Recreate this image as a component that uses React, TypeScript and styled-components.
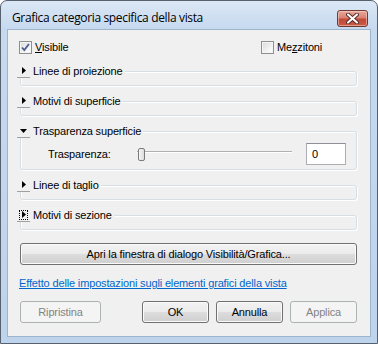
import styled, { createGlobalStyle } from 'styled-components';

const GlobalStyle = createGlobalStyle`
  html, body {
    margin: 0;
    padding: 0;
    background: #ffffff;
  }
  body {
    width: 378px;
    height: 344px;
    overflow: hidden;
  }
`;

const Window = styled.div`
  width: 378px;
  height: 344px;
  box-sizing: border-box;
  border: 1px solid #56606e;
  border-radius: 7px 7px 0 0;
  background: linear-gradient(#dbe7f5 0px, #c6d9ef 28px, #bed3ec 100%);
  display: flex;
  flex-direction: column;
  font-family: 'Liberation Sans', Arial, sans-serif;
  font-size: 11px;
  letter-spacing: -0.15px;
  color: #000;
  overflow: hidden;
`;

const TitleBar = styled.div`
  height: 28px;
  box-sizing: border-box;
  padding: 8px 9px 0 11px;
  display: flex;
  align-items: flex-start;
  justify-content: space-between;
`;

const Title = styled.span`
  font-family: 'Open Sans', 'Noto Sans', sans-serif;
  font-size: 12px;
  letter-spacing: -0.35px;
  line-height: 20px;
  margin-top: -1px;
  color: #000;
`;

const CloseButton = styled.div`
  width: 31px;
  height: 17px;
  margin-top: 1px;
  box-sizing: border-box;
  border: 1px solid #6b3a35;
  border-radius: 3px;
  background: linear-gradient(#e8a89c 0%, #d88373 45%, #c2493a 55%, #c85a45 100%);
  box-shadow: inset 0 0 0 1px rgba(255, 220, 210, 0.5);
  display: flex;
  align-items: center;
  justify-content: center;
`;

const Client = styled.div`
  flex: 1;
  margin: 0 6px 6px;
  border: 1px solid #9eb3cc;
  background: #f0f0f0;
  padding: 11px 13px 0 11px;
  display: flex;
  flex-direction: column;
`;

const CheckRow = styled.div`
  display: grid;
  grid-template-columns: 242px 1fr;
  height: 13px;
`;

const CheckLabel = styled.label`
  display: flex;
  align-items: center;
  gap: 3px;
  line-height: 13px;
`;

const CheckBox = styled.span`
  width: 13px;
  height: 13px;
  box-sizing: border-box;
  border: 1px solid #8e8f8f;
  background: linear-gradient(135deg, #d9d9d9 0%, #f6f6f6 70%, #ffffff 100%);
  box-shadow: inset 0 0 0 1px #f4f4f4;
  display: flex;
  align-items: center;
  justify-content: center;
`;

const Groups = styled.div`
  margin-top: 10px;
  display: flex;
  flex-direction: column;
  gap: 8px;
`;

const Group = styled.fieldset<{ $open?: boolean }>`
  margin: 0 0 0 1px;
  padding: 0 0 ${(p) => (p.$open ? '4px' : '7px')};
  min-width: 0;
  border: 1px solid #d5dfe5;
  border-radius: 3px;
  box-shadow: inset 1px 1px 0 #ffffff, 1px 1px 0 #ffffff;
`;

const Legend = styled.legend`
  margin-left: -4px;
  padding: 0 2px 0 0;
  height: 14px;
  display: flex;
  align-items: center;
  gap: 3px;
  background: #f0f0f0;
  line-height: 14px;
`;

const Toggle = styled.span<{ $focus?: boolean }>`
  width: 13px;
  height: 14px;
  box-sizing: border-box;
  border-bottom: 1px solid #a0a0a0;
  outline: ${(p) => (p.$focus ? '1px dotted #000' : 'none')};
  outline-offset: -3px;
  display: flex;
  align-items: center;
  justify-content: center;
`;

const GroupBody = styled.div`
  display: flex;
  align-items: center;
  padding: 5px 10px 0 27px;
`;

const FieldLabel = styled.span`
  width: 89px;
`;

const Slider = styled.div`
  position: relative;
  width: 155px;
  height: 22px;
  display: flex;
  align-items: center;

  &::before {
    content: '';
    position: absolute;
    left: 0;
    right: 0;
    top: 8px;
    height: 1px;
    background: #b0b0b0;
    border-bottom: 1px solid #ffffff;
  }
`;

const Thumb = styled.span`
  position: relative;
  margin: 1px 0 0 1px;
  width: 7px;
  height: 13px;
  box-sizing: border-box;
  border: 1px solid #7a7a7a;
  border-radius: 2px;
  background: linear-gradient(90deg, #f6f6f6, #dcdcdc);
`;

const TextBox = styled.div`
  margin-left: auto;
  width: 40px;
  height: 22px;
  box-sizing: border-box;
  border: 1px solid #abadb3;
  border-top-color: #8d9096;
  background: #ffffff;
  padding-left: 5px;
  line-height: 20px;
`;

const Button = styled.div<{ $width?: number; $disabled?: boolean }>`
  width: ${(p) => (p.$width ? `${p.$width}px` : 'auto')};
  height: 22px;
  box-sizing: border-box;
  border: 1px solid ${(p) => (p.$disabled ? '#adb2b5' : '#707070')};
  border-radius: 3px;
  background: ${(p) =>
    p.$disabled
      ? '#f4f4f4'
      : 'linear-gradient(#f2f2f2 0%, #ebebeb 50%, #dddddd 50%, #cfcfcf 100%)'};
  box-shadow: inset 0 0 0 1px ${(p) => (p.$disabled ? '#f4f4f4' : '#fbfbfb')};
  color: ${(p) => (p.$disabled ? '#838383' : '#000')};
  display: flex;
  align-items: center;
  justify-content: center;
  line-height: 20px;
`;

const WideButton = styled(Button)`
  margin: 13px 0 0 1px;
`;

const Link = styled.a`
  margin-top: 12px;
  color: #0066cc;
  text-decoration: underline;
  line-height: 13px;
  align-self: flex-start;
`;

const Footer = styled.div`
  margin: 11px 0 0 1px;
  display: flex;
  gap: 7px;

  & > :nth-child(2) {
    margin-left: auto;
  }
`;

const Arrow = ({ open }: { open?: boolean }) =>
  open ? (
    <svg width="7" height="4" viewBox="0 0 7 4">
      <path d="M0 0h7L3.5 4z" fill="#000" />
    </svg>
  ) : (
    <svg width="4" height="7" viewBox="0 0 4 7">
      <path d="M0 0v7l4-3.5z" fill="#000" />
    </svg>
  );

const Check = () => (
  <svg width="9" height="9" viewBox="0 0 9 9">
    <path d="M1 4.5l2.3 2.6L8 1" stroke="#4a5d8f" strokeWidth="1.8" fill="none" />
  </svg>
);

const CloseX = () => (
  <svg width="13" height="11" viewBox="0 0 13 11">
    <path d="M2 1.5l9 8M11 1.5l-9 8" stroke="#5a2e2a" strokeWidth="4" strokeLinecap="round" />
    <path d="M2 1.5l9 8M11 1.5l-9 8" stroke="#ffffff" strokeWidth="2" strokeLinecap="round" />
  </svg>
);

const groups = [
  { name: 'Linee di proiezione' },
  { name: 'Motivi di superficie' },
  { name: 'Trasparenza superficie', open: true },
  { name: 'Linee di taglio' },
  { name: 'Motivi di sezione', focus: true },
];

const App = () => {
  return (
    <>
      <GlobalStyle />
      <Window>
        <TitleBar>
          <Title>Grafica categoria specifica della vista</Title>
          <CloseButton>
            <CloseX />
          </CloseButton>
        </TitleBar>
        <Client>
          <CheckRow>
            <CheckLabel>
              <CheckBox>
                <Check />
              </CheckBox>
              <span>
                <u>V</u>isibile
              </span>
            </CheckLabel>
            <CheckLabel>
              <CheckBox />
              <span>
                Me<u>z</u>zitoni
              </span>
            </CheckLabel>
          </CheckRow>

          <Groups>
            {groups.map((g) => (
              <Group key={g.name} $open={g.open}>
                <Legend>
                  <Toggle $focus={g.focus}>
                    <Arrow open={g.open} />
                  </Toggle>
                  {g.name}
                </Legend>
                {g.open && (
                  <GroupBody>
                    <FieldLabel>Trasparenza:</FieldLabel>
                    <Slider>
                      <Thumb />
                    </Slider>
                    <TextBox>0</TextBox>
                  </GroupBody>
                )}
              </Group>
            ))}
          </Groups>

          <WideButton>Apri la finestra di dialogo Visibilità/Grafica...</WideButton>
          <Link>Effetto delle impostazioni sugli elementi grafici della vista</Link>

          <Footer>
            <Button $width={81} $disabled>
              Ripristina
            </Button>
            <Button $width={67}>OK</Button>
            <Button $width={67}>Annulla</Button>
            <Button $width={67} $disabled>
              Applica
            </Button>
          </Footer>
        </Client>
      </Window>
    </>
  );
};

export default App;
